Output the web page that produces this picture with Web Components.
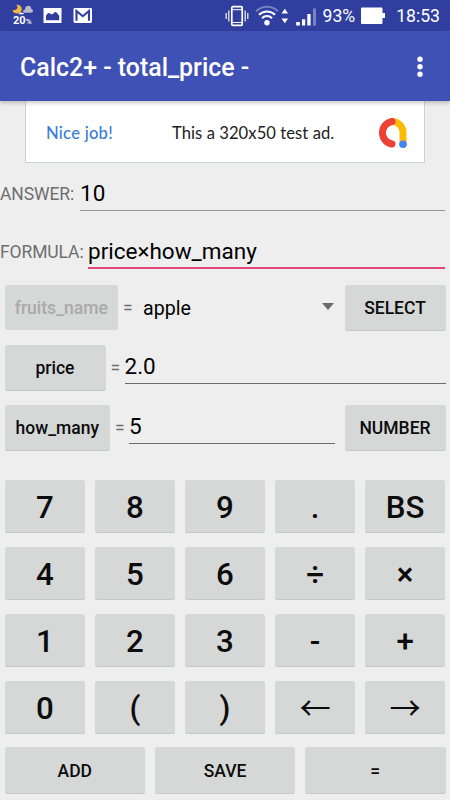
<!DOCTYPE html>
<html lang="en">
<head>
<meta charset="utf-8">
<meta name="viewport" content="width=device-width, initial-scale=1">
<title>Calc2+</title>
<style>
html, body
{
  margin: 0;
  height: 100%;
  overflow: hidden;
}
body
{
  font-family: Roboto, "Noto Sans CJK JP", sans-serif;
  background-color: #eee;
  --btn: #d6d7d7;
  --label: #6e6e6e;
  --ink: #0c0c0c;
}
</style>
</head>
<body>
<calc-app></calc-app>

<script>
function makeTemplate(html)
{
  let temp = document.createElement('template')
  temp.innerHTML = html
  return temp
}

function define(name, temp)
{
  window.customElements.define(name, class extends HTMLElement
  {
    constructor()
    {
      super()
      this.attachShadow({mode: 'open'})
      this.shadowRoot.appendChild(temp.content.cloneNode(true))
    }
  })
}


define('status-bar', makeTemplate(`
<style>
:host
{
  display: flex;
  align-items: center;
  justify-content: space-between;
  height: 31px;
  box-sizing: border-box;
  padding: 0 10px 0 12px;
  background-color: #303f9f;
  color: #fff;
}
div { display: flex; align-items: center; }
svg { display: block; flex: none; }
.weather { width: 21px; display: block; }
.percent { display: block; font-size: 11px; line-height: 11px; font-weight: 700; padding-left: 1px; white-space: nowrap; }
.percent small { font-size: 8px; font-weight: 500; }
.left { gap: 10px; }
.text { font-size: 17.6px; line-height: 31px; padding-top: 1px; }
</style>
<div class="left">
  <div class="weather">
    <svg width="21" height="11" viewBox="0 0 21 11">
      <path d="M4 .8C7 2.8 5.5 6.5.5 6.3 1.8 11 9.9 10.5 9.8 4.7 9.4 1.8 6.8.3 4 .8z" fill="#f0b840"/>
      <path d="M12.500 8.800c-2.300-.6-1.500-3.200.4-3 .1-5.300 6.300-5 6.400-.9 2.600.6 2 3.800-.6 3.900z" fill="#b9bbc7"/>
      <path d="M6.800 10.300q.5-2.300 2.500-1.600 2-.8 2.600 1.600z" fill="#fff"/>
    </svg>
    <span class="percent">20<small>%</small></span>
  </div>
  <svg width="19" height="15" viewBox="0 0 19 15"><path fill="#fff" fill-rule="evenodd" d="M.5 0h18v15H.5zM3 12.300h13.200V7.600c-1.300-1-2.200-3.700-3.800-3.600-1.500 0-2.100 2.500-3.700 2.300C7.500 6.200 6.800 4.600 5.500 5 4.200 5.400 4 7 3 7.500z"/></svg>
  <svg width="20" height="15" viewBox="0 0 20 15" style="margin-left:1px"><rect x=".5" width="18.500" height="15" rx="1.400" fill="#fff"/><path d="M3.500 12.800V3l6.300 5.200L16 3v9.800" fill="none" stroke="#303f9f" stroke-width="2.100"/></svg>
</div>
<div>
  <svg width="24" height="22" viewBox="0 0 24 22">
    <path d="M1.200 8v6M3.800 5.500v11M20.200 5.500v11M22.800 8v6" stroke="#e6e8f0" stroke-width="1.300"/>
    <rect x="6.800" y="1.700" width="10.400" height="18.600" rx="1" fill="none" stroke="#fff" stroke-width="1.700"/>
    <path d="M7 4.700h10M7 17.500h10" stroke="#fff" stroke-width="1"/>
  </svg>
  <svg width="34" height="22" viewBox="0 0 34 22" style="margin-left:6px">
    <g fill="none" stroke="#fff" stroke-width="2">
      <path d="M1.200 6.200a15.500 15.500 0 0 1 21.600 0" opacity=".35"/>
      <path d="M4 9.700a11.500 11.500 0 0 1 16 0"/>
      <path d="M7 13.200a7 7 0 0 1 10 0"/>
    </g>
    <circle cx="12" cy="17.700" r="2.700" fill="#fff"/>
    <path d="M26.500 8.500l3.300-4.800 3.300 4.800zM26.500 13.400h6.600l-3.300 4.800z" fill="#fff"/>
  </svg>
  <svg width="21" height="20" viewBox="0 0 21 20" style="margin-left:7px">
    <path d="M.2 16h3.600v3.500H.2zM6 13.200h3.200v6.300H6zM11.300 8h3.300v11.500h-3.300z" fill="#fff"/>
    <path d="M17 2.500h3v17h-3z" fill="#7983c2"/>
  </svg>
  <span class="text" style="margin-left:6px">93%</span>
  <svg width="25" height="18" viewBox="0 0 25 18" style="margin-left:6px"><path d="M1 .5h19.500q1 0 1 1V6H24v5h-2.500v5q0 1-1 1H1q-1 0-1-1V1.500q0-1 1-1z" fill="#fff"/></svg>
  <span class="text" style="margin-left:10px">18:53</span>
</div>
`))


define('app-bar', makeTemplate(`
<style>
:host
{
  display: flex;
  align-items: center;
  justify-content: space-between;
  height: 70px;
  box-sizing: border-box;
  padding: 3px 27px 0 20px;
  position: relative;
  background-color: #3f51b5;
  box-shadow: 0 2px 4px rgba(0, 0, 0, .22);
  color: #fff;
  font-size: 24.9px;
  font-weight: 500;
}
svg { display: block; margin-top: -2px; }
</style>
<span><slot></slot></span>
<svg width="6" height="22" viewBox="0 0 6 22" fill="#fff"><circle cx="3" cy="3.200" r="2.700"/><circle cx="3" cy="10.700" r="2.700"/><circle cx="3" cy="18.200" r="2.700"/></svg>
`))


define('ad-banner', makeTemplate(`
<style>
:host
{
  display: flex;
  align-items: center;
  width: 400px;
  height: 62px;
  box-sizing: border-box;
  margin: 0 auto;
  padding: 0 15px 0 20px;
  background-color: #fff;
  border: 1px solid #cdd2d5;
  border-top: 0;
  font-family: Lato, sans-serif;
  font-size: 16.6px;
  letter-spacing: .06px;
  color: #222;
}
b { font-weight: 500; color: #3b7cd5; width: 126px; padding-top: 2px; letter-spacing: .25px; }
span { flex: 1; white-space: nowrap; padding-top: 2px; }
svg { display: block; margin-top: 2px; }
</style>
<b><slot name="lead"></slot></b>
<span><slot></slot></span>
<svg width="33" height="32" viewBox="0 0 33 32" fill="none" stroke-width="7" stroke-linecap="round">
  <path d="M16 4.500A11 11 0 0 1 27 15.500V26" stroke="#fbbc04"/>
  <path d="M16 4.500A11.400 11.400 0 0 0 16 27" stroke="#ea4335"/>
  <circle cx="27" cy="27.200" r="3.800" fill="#4285f4"/>
</svg>
`))


// label and underlined value
define('text-field', makeTemplate(`
<style>
:host
{
  display: flex;
  align-items: flex-start;
  flex: 1;
  box-sizing: border-box;
  --line: #999;
  --line-width: 1px;
}
.label
{
  color: var(--label);
  font-size: 17.5px;
  letter-spacing: -.1px;
  line-height: 31px;
  white-space: nowrap;
  flex: none;
  width: var(--label-width);
}
.value
{
  flex: 1;
  height: 32px;
  line-height: 28px;
  box-sizing: border-box;
  font-size: 22.5px;
  color: #000;
  border-bottom: var(--line-width) solid var(--line);
}
</style>
<span class="label"><slot name="label"></slot></span>
<span class="value"><slot></slot></span>
`))


define('calc-button', makeTemplate(`
<style>
:host
{
  display: flex;
  align-items: center;
  justify-content: center;
  box-sizing: border-box;
  height: 46px;
  border-radius: 2.5px;
  background-color: var(--btn);
  box-shadow: inset 0 -1px 0 rgba(0, 0, 0, .07);
  color: var(--ink);
  font-size: 17.5px;
  font-weight: 500;
  flex: none;
  cursor: pointer;
}
:host([disabled]) { color: #a9aaaa; box-shadow: none; cursor: default; }
</style>
<slot></slot>
`))


define('drop-down', makeTemplate(`
<style>
:host
{
  display: flex;
  align-items: center;
  justify-content: space-between;
  flex: 1;
  padding-right: 11px;
  font-size: 19.6px;
  color: #000;
}
i
{
  border: 6.5px solid transparent;
  border-top: 7px solid #6b6b6b;
  border-bottom: 0;
  margin-top: -3px;
}
</style>
<slot></slot><i></i>
`))


define('key-pad', makeTemplate(`
<style>
:host { display: block; }
.keys
{
  display: grid;
  grid-template-columns: repeat(5, 1fr);
  gap: 14px 9.3px;
}
.keys calc-button { height: 53px; font-size: 31.25px; padding-top: 2px; }
.keys .arrow { font-family: "Noto Sans CJK JP", sans-serif; font-weight: 400; padding: 0 0 3px; }
.actions
{
  display: grid;
  grid-template-columns: repeat(3, 1fr);
  gap: 9.5px;
  margin-top: 13px;
}
.actions calc-button { height: 47px; }
</style>
<div class="keys"></div>
<div class="actions">
  <calc-button>ADD</calc-button>
  <calc-button>SAVE</calc-button>
  <calc-button>=</calc-button>
</div>
`))


define('calc-app', makeTemplate(`
<style>
:host
{
  display: flex;
  flex-direction: column;
  height: 800px;
  width: 450px;
}
.field { flex: none; padding-right: 5px; }
.answer { margin-top: 16px; --label-width: 80px; }
.formula { margin-top: 26px; --label-width: 88px; --line: #e0457b; --line-width: 2px; }
.row { display: flex; height: 46px; padding: 0 4.500px; margin-bottom: 14px; }
.rows { padding-top: 16px; }
.eq { color: var(--label); font-size: 17.5px; line-height: 47px; flex: none; width: 19px; padding-left: 5px; box-sizing: border-box; }
.row text-field { padding-top: 7px; --label-width: 0; --line: #6d6d6d; }
key-pad { padding: 15px 4.500px 0; }
</style>
<status-bar></status-bar>
<app-bar>Calc2+ - total_price -</app-bar>
<ad-banner><span slot="lead">Nice job!</span>This a 320x50 test ad.</ad-banner>
<text-field class="field answer"><span slot="label">ANSWER:</span>10</text-field>
<text-field class="field formula"><span slot="label">FORMULA:</span>price×how_many</text-field>
<div class="rows">
  <div class="row">
    <calc-button disabled style="width:113.500px;height:45px">fruits_name</calc-button>
    <span class="eq">=</span>
    <drop-down style="padding-left:6px">apple</drop-down>
    <calc-button style="width:101px">SELECT</calc-button>
  </div>
  <div class="row">
    <calc-button style="width:101px">price</calc-button>
    <span class="eq">=</span>
    <text-field>2.0</text-field>
  </div>
  <div class="row">
    <calc-button style="width:105.500px">how_many</calc-button>
    <span class="eq">=</span>
    <text-field style="margin-right:10px">5</text-field>
    <calc-button style="width:101px">NUMBER</calc-button>
  </div>
</div>
<key-pad></key-pad>
`))


// fill the keypad
let keys = ['7', '8', '9', '.', 'BS', '4', '5', '6', '÷', '×', '1', '2', '3', '-', '+', '0', '(', ')', '←', '→']
let pad = document.querySelector('calc-app').shadowRoot.querySelector('key-pad')
keys.forEach(key=>{
  let button = document.createElement('calc-button')
  button.textContent = key
  if (key == '←' || key == '→') button.className = 'arrow'
  pad.shadowRoot.querySelector('.keys').appendChild(button)
})
</script>
</body>
</html>
